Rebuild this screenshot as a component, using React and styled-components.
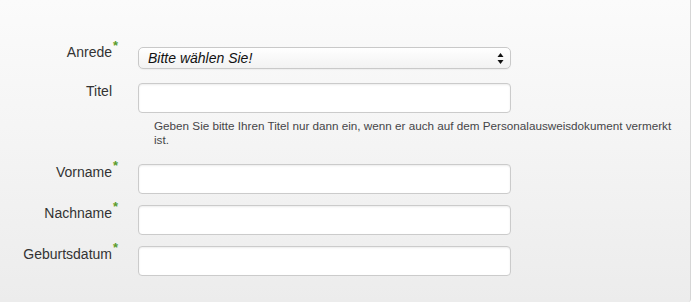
import React from "react"
import styled, { createGlobalStyle } from "styled-components"

const GlobalStyle = createGlobalStyle`
  html, body {
    margin: 0;
    padding: 0;
    background: #fff;
  }
  body {
    font-family: "Liberation Sans", Arial, Helvetica, sans-serif;
  }
`

const Panel = styled.div`
  width: 691px;
  height: 302px;
  box-sizing: border-box;
  border-right: 1px solid #d6d6d6;
  border-bottom-right-radius: 3px;
  background: linear-gradient(to bottom, #fbfbfb 0%, #f3f3f3 55%, #ececec 100%);
  padding-top: 42px;
`

const Row = styled.div`
  display: flex;
  align-items: flex-start;
  gap: 26px;
  margin-bottom: ${p => p.$after || 9}px;
`

const Label = styled.label`
  width: 112px;
  flex: none;
  text-align: right;
  font-size: 14px;
  line-height: 20px;
  color: #333;
`

const LabelText = styled.span`
  position: relative;
`

const Required = styled.sup`
  position: absolute;
  left: 100%;
  top: -5px;
  margin-left: 1px;
  font-size: 13px;
  line-height: 1;
  font-weight: bold;
  color: #5a9c2c;
`

const Field = styled.div`
  width: 373px;
  flex: none;
  padding-top: ${p => p.$top || 2}px;
`

const SelectBox = styled.div`
  position: relative;
  height: 22px;
  box-sizing: border-box;
  border: 1px solid #c9c9c9;
  border-radius: 5px;
  background: linear-gradient(to bottom, #ffffff 0%, #f2f2f2 100%);
  box-shadow: 0 1px 1px rgba(0, 0, 0, 0.04);

  select {
    appearance: none;
    -webkit-appearance: none;
    width: 100%;
    height: 100%;
    border: 0;
    background: transparent;
    padding: 0 24px 0 9px;
    font-family: "Liberation Sans", Arial, sans-serif;
    font-size: 14px;
    font-style: italic;
    color: #111;
    outline: none;
  }
`

const Arrows = styled.svg`
  position: absolute;
  right: 6px;
  top: 4px;
  pointer-events: none;
`

const Input = styled.input`
  display: block;
  width: 100%;
  height: 30px;
  box-sizing: border-box;
  border: 1px solid #cbcbcb;
  border-radius: 4px;
  background: #fff;
  box-shadow: inset 0 1px 2px rgba(0, 0, 0, 0.08);
  padding: 0 8px;
  font-family: "Liberation Sans", Arial, sans-serif;
  font-size: 14px;
  outline: none;
`

const Help = styled.p`
  margin: 6px 0 0 16px;
  width: 530px;
  font-size: 11.7px;
  line-height: 14px;
  color: #454548;
`

const fields = [
  { name: "vorname", label: "Vorname", after: 9 },
  { name: "nachname", label: "Nachname", after: 9 },
  { name: "geburtsdatum", label: "Geburtsdatum", after: 0 },
]

export default function App() {
  return (
    <>
      <GlobalStyle />
      <Panel>
        <Row $after={12}>
          <Label htmlFor="anrede">
            <LabelText>
              Anrede<Required>*</Required>
            </LabelText>
          </Label>
          <Field $top={5}>
            <SelectBox>
              <select id="anrede" defaultValue="">
                <option value="">Bitte wählen Sie!</option>
                <option value="herr">Herr</option>
                <option value="frau">Frau</option>
              </select>
              <Arrows width="7" height="13" viewBox="0 0 7 13">
                <path d="M3.5 1 L6.5 5 L0.5 5 Z" fill="#111" />
                <path d="M3.5 12 L6.5 8 L0.5 8 Z" fill="#111" />
              </Arrows>
            </SelectBox>
          </Field>
        </Row>
        <Row $after={15}>
          <Label htmlFor="titel">
            <LabelText>Titel</LabelText>
          </Label>
          <Field>
            <Input id="titel" type="text" />
            <Help>
              Geben Sie bitte Ihren Titel nur dann ein, wenn er auch auf dem
              Personalausweisdokument vermerkt ist.
            </Help>
          </Field>
        </Row>
        {fields.map(f => (
          <Row key={f.name} $after={f.after}>
            <Label htmlFor={f.name}>
              <LabelText>
                {f.label}
                <Required>*</Required>
              </LabelText>
            </Label>
            <Field>
              <Input id={f.name} type="text" />
            </Field>
          </Row>
        ))}
      </Panel>
    </>
  )
}
